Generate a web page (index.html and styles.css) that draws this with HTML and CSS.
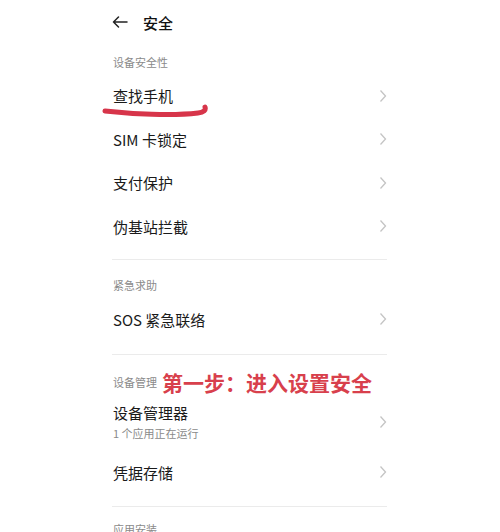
FILE: index.html
```html
<!DOCTYPE html>
<html lang="zh">
<head>
<meta charset="utf-8">
<link rel="stylesheet" href="styles.css">
</head>
<body>
<div class="page">
  <div class="header">
    <svg class="back" width="16" height="12" viewBox="0 0 16 12"><path d="M15 6H1.5M6.5 1L1.5 6l5 5" fill="none" stroke="#222" stroke-width="1.5" stroke-linecap="round" stroke-linejoin="round"/></svg>
    <span class="title">安全</span>
  </div>

  <div class="group g1">
    <div class="label">设备安全性</div>
    <div class="row mark-row">
      <span class="text">查找手机</span>
      <svg class="chev" width="8" height="14" viewBox="0 0 8 14"><path d="M1.5 1.5L6.5 7l-5 5.5" fill="none" stroke="#c4c4c4" stroke-width="1.3"/></svg>
      <svg class="scribble" width="110" height="16" viewBox="0 0 110 16"><path d="M3 7 C 30 10, 70 12, 96 9 C 102 8.5, 104 6, 103 3" fill="none" stroke="#d7354a" stroke-width="5" stroke-linecap="round"/></svg>
    </div>
    <div class="row"><span class="text">SIM 卡锁定</span><svg class="chev" width="8" height="14" viewBox="0 0 8 14"><path d="M1.5 1.5L6.5 7l-5 5.5" fill="none" stroke="#c4c4c4" stroke-width="1.3"/></svg></div>
    <div class="row"><span class="text">支付保护</span><svg class="chev" width="8" height="14" viewBox="0 0 8 14"><path d="M1.5 1.5L6.5 7l-5 5.5" fill="none" stroke="#c4c4c4" stroke-width="1.3"/></svg></div>
    <div class="row"><span class="text">伪基站拦截</span><svg class="chev" width="8" height="14" viewBox="0 0 8 14"><path d="M1.5 1.5L6.5 7l-5 5.5" fill="none" stroke="#c4c4c4" stroke-width="1.3"/></svg></div>
    <div class="divider"></div>
  </div>

  <div class="group g2">
    <div class="label">紧急求助</div>
    <div class="row"><span class="text">SOS 紧急联络</span><svg class="chev" width="8" height="14" viewBox="0 0 8 14"><path d="M1.5 1.5L6.5 7l-5 5.5" fill="none" stroke="#c4c4c4" stroke-width="1.3"/></svg></div>
    <div class="divider"></div>
  </div>

  <div class="group g3">
    <div class="label annot-row">设备管理<span class="annot">第一步：进入设置安全</span></div>
    <div class="row tall">
      <div class="two">
        <span class="text">设备管理器</span>
        <span class="sub">1 个应用正在运行</span>
      </div>
      <svg class="chev" width="8" height="14" viewBox="0 0 8 14"><path d="M1.5 1.5L6.5 7l-5 5.5" fill="none" stroke="#c4c4c4" stroke-width="1.3"/></svg>
    </div>
    <div class="row"><span class="text">凭据存储</span><svg class="chev" width="8" height="14" viewBox="0 0 8 14"><path d="M1.5 1.5L6.5 7l-5 5.5" fill="none" stroke="#c4c4c4" stroke-width="1.3"/></svg></div>
    <div class="divider"></div>
  </div>

  <div class="group g4">
    <div class="label">应用安装</div>
  </div>
</div>
</body>
</html>
```
FILE: styles.css
```css
html, body {
  margin: 0;
  padding: 0;
  background: #ffffff;
}
body {
  font-family: "Noto Sans CJK SC", "Noto Sans", sans-serif;
  color: #1a1a1a;
  height: 532px;
  overflow: hidden;
}
.page {
  width: 275px;
  margin-left: 112px;
}
.header {
  height: 44px;
  display: flex;
  align-items: center;
  gap: 15px;
}
.back {
  display: block;
}
.title {
  font-size: 15px;
  font-weight: 500;
  color: #111;
}
.group {
  padding-top: 16px;
}
.g1 { padding-top: 10px; }
.g2 { padding-top: 17px; }
.g3 { padding-top: 19px; }
.g4 { padding-top: 14px; }
.label {
  height: 16px;
  line-height: 16px;
  font-size: 11px;
  color: #8a8a8a;
  margin-bottom: 4px;
  padding-left: 1px;
}
.annot-row {
  position: relative;
}
.annot {
  position: absolute;
  left: 50px;
  top: -5px;
  font-size: 21px;
  line-height: 26px;
  font-weight: 700;
  color: #d8404c;
  white-space: nowrap;
}
.row {
  height: 44px;
  display: flex;
  align-items: center;
  justify-content: space-between;
  position: relative;
  padding-left: 1px;
}
.g1 .row {
  height: 43.5px;
}
.row.tall {
  height: 56px;
}
.text {
  font-size: 15px;
  color: #1a1a1a;
}
.two {
  display: flex;
  flex-direction: column;
  gap: 2px;
}
.two .text {
  line-height: 20px;
}
.sub {
  font-size: 11px;
  color: #8a8a8a;
  line-height: 16px;
}
.chev {
  display: block;
}
.scribble {
  position: absolute;
  left: -10px;
  top: 30px;
}
.divider {
  height: 1px;
  background: #ebebeb;
  margin-top: 12px;
}
.g1 .divider { margin-top: 11px; }
.g2 .divider { margin-top: 13px; }
```
